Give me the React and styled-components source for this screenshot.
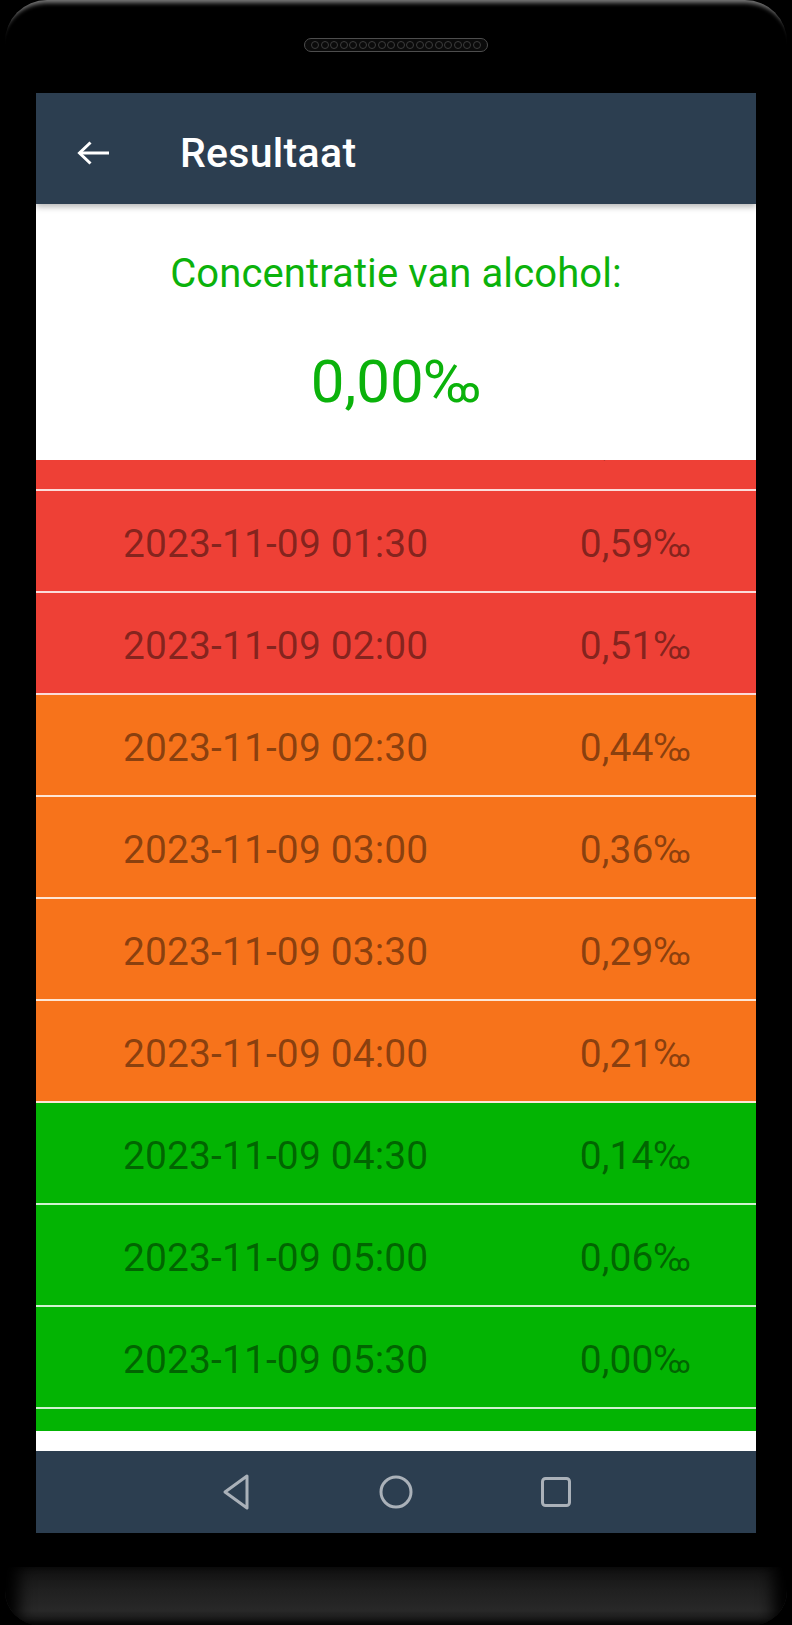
import React, { useLayoutEffect, useRef } from "react";
import styled, { createGlobalStyle } from "styled-components";

const GlobalStyle = createGlobalStyle`
  html, body {
    margin: 0;
    padding: 0;
    background: #000;
  }
  body {
    font-family: Roboto, "Noto Sans", "Liberation Sans", sans-serif;
  }
`;

const Phone = styled.div`
  height: 1625px;
  margin: 0 5px;
  display: flex;
  flex-direction: column;
  background: #000;
  border-radius: 42px 42px 34px 34px;
  box-shadow: inset 0 8px 4px -5px rgba(150, 150, 150, 0.8);
  overflow: hidden;
`;

const Earpiece = styled.div`
  height: 93px;
  flex: none;
  box-sizing: border-box;
  padding-top: 38px;
  display: flex;
  justify-content: center;
`;

const Speaker = styled.div`
  width: 184px;
  height: 14px;
  box-sizing: border-box;
  border: 1.5px solid #4d4d4d;
  border-radius: 7px;
  background: #0b0b0b;
  display: flex;
  align-items: center;
  justify-content: center;
  gap: 1.5px;
`;

const Hole = styled.span`
  width: 8px;
  height: 8px;
  box-sizing: border-box;
  border: 1px solid #3d3d3d;
  border-radius: 50%;
`;

const Screen = styled.div`
  height: 1440px;
  flex: none;
  margin: 0 31px;
  display: flex;
  flex-direction: column;
  background: #fff;
`;

const AppBar = styled.header`
  height: 111px;
  flex: none;
  box-sizing: border-box;
  padding: 8px 0 0 40px;
  display: flex;
  align-items: center;
  background: #2c3e50;
  box-shadow: 0 3px 6px rgba(0, 0, 0, 0.28);
  position: relative;
  z-index: 1;
`;

const IconButton = styled.button`
  background: none;
  border: 0;
  padding: 0;
  display: flex;
  align-items: center;
  justify-content: center;
  color: ${(p) => p.$color || "#fff"};
  width: ${(p) => p.$width || "auto"};
`;

const Title = styled.h1`
  margin: 0 0 0 70px;
  font: 500 41px/40px Roboto, sans-serif;
  color: #fff;
  letter-spacing: 0.3px;
`;

const Summary = styled.section`
  height: 256px;
  flex: none;
  box-sizing: border-box;
  padding-top: 50px;
  text-align: center;
  color: #0bb20b;
`;

const SummaryLabel = styled.div`
  font-size: 40px;
  line-height: 40px;
  letter-spacing: 0.1px;
`;

const SummaryValue = styled.div`
  margin-top: 58px;
  font-size: 60px;
  line-height: 60px;
`;

const List = styled.div`
  height: 971px;
  flex: none;
  overflow: hidden;
`;

const Row = styled.div`
  height: 102px;
  box-sizing: border-box;
  padding: 6px 65px 0 87px;
  display: flex;
  align-items: center;
  justify-content: space-between;
  background: ${(p) => p.$color};
  border-bottom: 2px solid rgba(255, 255, 255, 0.82);
  font-size: 39px;
  letter-spacing: 0.1px;
  color: rgba(0, 0, 0, 0.45);
`;

const NavBar = styled.nav`
  height: 82px;
  flex: none;
  margin-top: auto;
  display: flex;
  justify-content: center;
  align-items: center;
  background: #2c3e50;
`;

const Chin = styled.div`
  flex: 1;
  margin-top: 34px;
  background: linear-gradient(180deg, #121212 0%, #202020 40%, #282828 75%, #1c1c1c 100%);
  box-shadow: inset 20px 0 16px -6px #000, inset -20px 0 16px -6px #000,
    inset 0 -6px 8px -4px #000;
`;

const readings = [
  ["2023-11-09 01:00", 0.66],
  ["2023-11-09 01:30", 0.59],
  ["2023-11-09 02:00", 0.51],
  ["2023-11-09 02:30", 0.44],
  ["2023-11-09 03:00", 0.36],
  ["2023-11-09 03:30", 0.29],
  ["2023-11-09 04:00", 0.21],
  ["2023-11-09 04:30", 0.14],
  ["2023-11-09 05:00", 0.06],
  ["2023-11-09 05:30", 0.0],
  ["2023-11-09 06:00", 0.0],
];

const levelColor = (v) => (v > 0.5 ? "#ee4036" : v > 0.2 ? "#f7731b" : "#03b403");
const fmt = (v) => v.toFixed(2).replace(".", ",") + "‰";

const BackArrow = () => (
  <svg width="34" height="24" viewBox="0 0 34 24" fill="none" stroke="currentColor" strokeWidth="3">
    <path d="M3.5 12H33" />
    <path d="M14.5 1.5L3.5 12l11 10.5" />
  </svg>
);

const NavBack = () => (
  <svg width="32" height="38" viewBox="0 0 32 38" fill="none" stroke="currentColor" strokeWidth="3" strokeLinejoin="round">
    <path d="M27 3L5 19l22 16z" />
  </svg>
);

const NavHome = () => (
  <svg width="34" height="34" viewBox="0 0 34 34" fill="none" stroke="currentColor" strokeWidth="3">
    <circle cx="17" cy="17" r="15" />
  </svg>
);

const NavRecent = () => (
  <svg width="32" height="32" viewBox="0 0 32 32" fill="none" stroke="currentColor" strokeWidth="3">
    <rect x="2.5" y="2.5" width="27" height="27" rx="3" />
  </svg>
);

export default function App() {
  const listRef = useRef(null);

  useLayoutEffect(() => {
    if (listRef.current) listRef.current.scrollTop = 71;
  }, []);

  return (
    <>
      <GlobalStyle />
      <Phone>
        <Earpiece>
          <Speaker>
            {Array.from({ length: 18 }).map((_, i) => (
              <Hole key={i} />
            ))}
          </Speaker>
        </Earpiece>
        <Screen>
          <AppBar>
            <IconButton aria-label="Terug">
              <BackArrow />
            </IconButton>
            <Title>Resultaat</Title>
          </AppBar>
          <Summary>
            <SummaryLabel>Concentratie van alcohol:</SummaryLabel>
            <SummaryValue>0,00‰</SummaryValue>
          </Summary>
          <List ref={listRef}>
            {readings.map(([time, v]) => (
              <Row key={time} $color={levelColor(v)}>
                <span>{time}</span>
                <span>{fmt(v)}</span>
              </Row>
            ))}
          </List>
          <NavBar>
            <IconButton $width="160px" $color="#aab1b9" aria-label="Terug">
              <NavBack />
            </IconButton>
            <IconButton $width="160px" $color="#aab1b9" aria-label="Home">
              <NavHome />
            </IconButton>
            <IconButton $width="160px" $color="#aab1b9" aria-label="Recent">
              <NavRecent />
            </IconButton>
          </NavBar>
        </Screen>
        <Chin />
      </Phone>
    </>
  );
}
